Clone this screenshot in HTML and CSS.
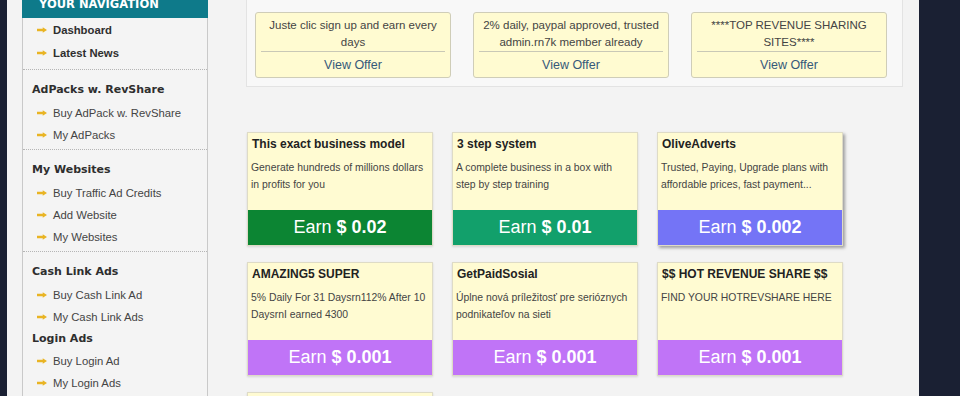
FILE: index.html
```html
<!DOCTYPE html>
<html lang="en">
<head>
<meta charset="utf-8">
<title>Dashboard</title>
<link rel="stylesheet" href="styles.css">
</head>
<body>
<div class="page">
  <aside class="sidebar">
    <div class="nav-head">YOUR NAVIGATION</div>
    <ul class="nav-list nav-top">
      <li><svg class="arr" viewBox="0 0 11 6"><path d="M0 1.7h6.3V0L11 3 6.3 6V4.3H0z"/></svg>Dashboard</li>
      <li><svg class="arr" viewBox="0 0 11 6"><path d="M0 1.7h6.3V0L11 3 6.3 6V4.3H0z"/></svg>Latest News</li>
    </ul>
    <div class="nav-sec">
      <h3>AdPacks w. RevShare</h3>
      <ul class="nav-list">
        <li><svg class="arr" viewBox="0 0 11 6"><path d="M0 1.7h6.3V0L11 3 6.3 6V4.3H0z"/></svg>Buy AdPack w. RevShare</li>
        <li><svg class="arr" viewBox="0 0 11 6"><path d="M0 1.7h6.3V0L11 3 6.3 6V4.3H0z"/></svg>My AdPacks</li>
      </ul>
    </div>
    <div class="nav-sec">
      <h3>My Websites</h3>
      <ul class="nav-list">
        <li><svg class="arr" viewBox="0 0 11 6"><path d="M0 1.7h6.3V0L11 3 6.3 6V4.3H0z"/></svg>Buy Traffic Ad Credits</li>
        <li><svg class="arr" viewBox="0 0 11 6"><path d="M0 1.7h6.3V0L11 3 6.3 6V4.3H0z"/></svg>Add Website</li>
        <li><svg class="arr" viewBox="0 0 11 6"><path d="M0 1.7h6.3V0L11 3 6.3 6V4.3H0z"/></svg>My Websites</li>
      </ul>
    </div>
    <div class="nav-sec">
      <h3>Cash Link Ads</h3>
      <ul class="nav-list">
        <li><svg class="arr" viewBox="0 0 11 6"><path d="M0 1.7h6.3V0L11 3 6.3 6V4.3H0z"/></svg>Buy Cash Link Ad</li>
        <li><svg class="arr" viewBox="0 0 11 6"><path d="M0 1.7h6.3V0L11 3 6.3 6V4.3H0z"/></svg>My Cash Link Ads</li>
      </ul>
      <h3 class="h-tight">Login Ads</h3>
      <ul class="nav-list">
        <li><svg class="arr" viewBox="0 0 11 6"><path d="M0 1.7h6.3V0L11 3 6.3 6V4.3H0z"/></svg>Buy Login Ad</li>
        <li><svg class="arr" viewBox="0 0 11 6"><path d="M0 1.7h6.3V0L11 3 6.3 6V4.3H0z"/></svg>My Login Ads</li>
      </ul>
    </div>
  </aside>

  <main class="main">
    <section class="offers">
      <div class="offer">
        <p>Juste clic sign up and earn every days</p>
        <a class="offer-link">View Offer</a>
      </div>
      <div class="offer">
        <p>2% daily, paypal approved, trusted admin.rn7k member already</p>
        <a class="offer-link">View Offer</a>
      </div>
      <div class="offer">
        <p>****TOP REVENUE SHARING SITES****</p>
        <a class="offer-link">View Offer</a>
      </div>
    </section>

    <section class="cards">
      <div class="card">
        <h4>This exact business model</h4>
        <p>Generate hundreds of millions dollars in profits for you</p>
        <div class="earn green">Earn <b>$ 0.02</b></div>
      </div>
      <div class="card">
        <h4>3 step system</h4>
        <p>A complete business in a box with step by step training</p>
        <div class="earn teal">Earn <b>$ 0.01</b></div>
      </div>
      <div class="card hover">
        <h4>OliveAdverts</h4>
        <p>Trusted, Paying, Upgrade plans with affordable prices, fast payment...</p>
        <div class="earn blue">Earn <b>$ 0.002</b></div>
      </div>
      <div class="card">
        <h4>AMAZING5 SUPER</h4>
        <p>5% Daily For 31 Daysrn112% After 10 DaysrnI earned 4300</p>
        <div class="earn purple">Earn <b>$ 0.001</b></div>
      </div>
      <div class="card">
        <h4>GetPaidSosial</h4>
        <p>Úplne nová príležitosť pre serióznych podnikateľov na sieti</p>
        <div class="earn purple">Earn <b>$ 0.001</b></div>
      </div>
      <div class="card">
        <h4>$$ HOT REVENUE SHARE $$</h4>
        <p>FIND YOUR HOTREVSHARE HERE</p>
        <div class="earn purple">Earn <b>$ 0.001</b></div>
      </div>
      <div class="card">
        <h4>&nbsp;</h4>
        <p>&nbsp;</p>
        <div class="earn purple">&nbsp;</div>
      </div>
    </section>
  </main>
</div>
</body>
</html>
```

FILE: styles.css
```css
html, body {
  margin: 0;
  padding: 0;
  overflow: hidden;
}

body {
  background: #1a2033;
  font-family: "Liberation Sans", Arial, sans-serif;
  color: #333;
}

.page {
  margin: -14px 0 0 7px;
  width: 912px;
  min-height: 600px;
  background: #f3f3f3;
  display: flex;
  align-items: flex-start;
}

/* ---------- sidebar ---------- */
.sidebar {
  margin-left: 15px;
  width: 186px;
  box-sizing: border-box;
  border-left: 1px solid #c9c9c9;
  border-right: 1px solid #c9c9c9;
  background: #f4f4f4;
  min-height: 600px;
}

.nav-head {
  margin: 0 -1px;
  background: #0e7a8a;
  color: #fff;
  font-family: "DejaVu Sans", Verdana, sans-serif;
  font-weight: bold;
  font-size: 11.5px;
  line-height: 14px;
  height: 32px;
  box-sizing: border-box;
  padding: 11px 0 0 17px;
}

.nav-list {
  list-style: none;
  margin: 0;
  padding: 0;
}

.nav-list li {
  display: flex;
  align-items: center;
  height: 22px;
  padding-left: 14px;
  font-size: 11.3px;
  color: #444;
}

.nav-top {
  padding-bottom: 4px;
  border-bottom: 1px dotted #b5b5b5;
}

.nav-top li {
  height: 24px;
  font-weight: bold;
  color: #2f2f2f;
}

.nav-top li:first-child {
  height: 23px;
}

.arr {
  width: 10px;
  height: 6px;
  margin-right: 6px;
  flex: none;
  fill: #e9b423;
}

.nav-sec {
  padding: 8px 0 3px;
  border-bottom: 1px dotted #b5b5b5;
}

.nav-sec h3 {
  margin: 0;
  padding-left: 9px;
  height: 24px;
  line-height: 24px;
  font-family: "DejaVu Sans", Verdana, sans-serif;
  font-weight: bold;
  font-size: 11px;
  color: #2e2e2e;
}

.nav-sec h3.h-tight {
  height: 22px;
  line-height: 22px;
}

/* ---------- main ---------- */
.main {
  flex: 1;
  padding: 0 16px 0 38px;
}

.offers {
  background: #f8f8f8;
  border: 1px solid #e3e3e3;
  border-top: none;
  padding: 26px 14px 8px 8px;
  display: flex;
  gap: 22px;
}

.offer {
  width: 196px;
  height: 66px;
  box-sizing: border-box;
  background: #fffbd1;
  border: 1px solid #cfcdb8;
  border-radius: 3px;
  padding: 4px 5px 0;
  display: flex;
  flex-direction: column;
  text-align: center;
}

.offer p {
  margin: 0;
  padding: 0 1px;
  height: 34px;
  font-size: 11.5px;
  line-height: 17px;
  color: #444;
  border-bottom: 1px solid #c9c8b6;
  margin-bottom: 4px;
  box-sizing: content-box;
}

.offer-link {
  display: block;
  line-height: 18px;
  font-size: 12.5px;
  color: #36597a;
}

.cards {
  margin-top: 45px;
  margin-left: 1px;
  display: grid;
  grid-template-columns: repeat(3, 186px);
  grid-auto-rows: 114px;
  column-gap: 19px;
  row-gap: 16px;
}

.card {
  box-sizing: border-box;
  background: #fffbd2;
  border: 1px solid #dedbc6;
  box-shadow: 0 1px 2px rgba(0, 0, 0, 0.12);
  display: flex;
  flex-direction: column;
}

.card.hover {
  box-shadow: 2px 2px 3px rgba(0, 0, 0, 0.35);
}

.card h4 {
  margin: 0;
  padding: 3px 4px 0;
  font-size: 12px;
  line-height: 16px;
  font-weight: bold;
  color: #222;
  white-space: nowrap;
}

.card p {
  margin: 7px 0 0;
  padding: 0 3px;
  font-size: 10.4px;
  line-height: 17px;
  color: #444;
}

.earn {
  margin-top: auto;
  height: 35px;
  line-height: 35px;
  text-align: center;
  color: #fff;
  font-size: 18px;
}

.earn b {
  font-weight: bold;
}

.green { background: #0c8533; }
.teal { background: #12a06b; }
.blue { background: #7474f6; }
.purple { background: #c074f7; }
```
